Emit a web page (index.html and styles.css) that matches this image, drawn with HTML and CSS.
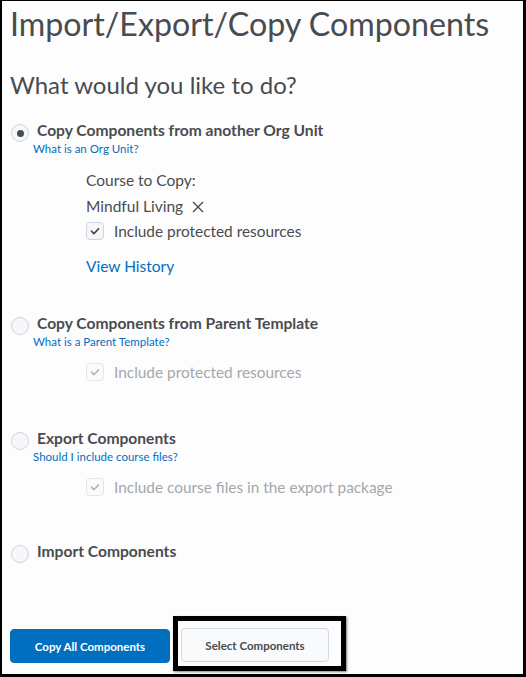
FILE: index.html
```html
<!DOCTYPE html>
<html lang="en">
<head>
<meta charset="utf-8">
<title>Import/Export/Copy Components</title>
<link rel="stylesheet" href="styles.css">
</head>
<body>
<div class="page">
  <header class="header">
    <h1 class="title">Import/Export/Copy Components</h1>
  </header>
  <main class="content">
    <h2 class="subtitle">What would you like to do?</h2>

    <section class="option option-first">
      <div class="radio-row">
        <span class="radio radio-checked"></span>
        <span class="radio-label">Copy Components from another Org Unit</span>
      </div>
      <a class="help-link" href="#">What is an Org Unit?</a>
      <div class="details">
        <div class="detail-line course-label">Course to Copy:</div>
        <div class="detail-line course-name">Mindful Living
          <svg class="remove-icon" width="12" height="12" viewBox="0 0 12 12"><path d="M1 1 L11 11 M11 1 L1 11" stroke="#494c4e" stroke-width="1.4" fill="none"/></svg>
        </div>
        <div class="check-row">
          <span class="checkbox"><svg width="18" height="18" viewBox="0 0 18 18"><path d="M5 9.2 L7.8 12 L13 6.6" stroke="#494c4e" stroke-width="1.8" fill="none" stroke-linecap="round" stroke-linejoin="round"/></svg></span>
          <span class="check-label">Include protected resources</span>
        </div>
        <a class="history-link" href="#">View History</a>
      </div>
    </section>

    <section class="option option-second">
      <div class="radio-row">
        <span class="radio"></span>
        <span class="radio-label">Copy Components from Parent Template</span>
      </div>
      <a class="help-link" href="#">What is a Parent Template?</a>
      <div class="details">
        <div class="check-row check-disabled">
          <span class="checkbox"><svg width="18" height="18" viewBox="0 0 18 18"><path d="M5 9.2 L7.8 12 L13 6.6" stroke="#b5b8ba" stroke-width="1.8" fill="none" stroke-linecap="round" stroke-linejoin="round"/></svg></span>
          <span class="check-label">Include protected resources</span>
        </div>
      </div>
    </section>

    <section class="option option-third">
      <div class="radio-row">
        <span class="radio"></span>
        <span class="radio-label">Export Components</span>
      </div>
      <a class="help-link" href="#">Should I include course files?</a>
      <div class="details">
        <div class="check-row check-disabled">
          <span class="checkbox"><svg width="18" height="18" viewBox="0 0 18 18"><path d="M5 9.2 L7.8 12 L13 6.6" stroke="#b5b8ba" stroke-width="1.8" fill="none" stroke-linecap="round" stroke-linejoin="round"/></svg></span>
          <span class="check-label">Include course files in the export package</span>
        </div>
      </div>
    </section>

    <section class="option option-fourth">
      <div class="radio-row">
        <span class="radio"></span>
        <span class="radio-label">Import Components</span>
      </div>
    </section>

    <div class="actions">
      <button class="btn btn-primary" type="button">Copy All Components</button>
      <span class="highlight-frame">
        <button class="btn btn-secondary" type="button">Select Components</button>
      </span>
    </div>
  </main>
</div>
</body>
</html>
```

FILE: styles.css
```css
html, body {
  margin: 0;
  padding: 0;
  background: #ffffff;
}

body {
  font-family: Lato, "Open Sans", sans-serif;
  color: #494c4e;
}

.page {
  box-sizing: border-box;
  width: 526px;
  height: 677px;
  overflow: hidden;
  border-style: solid;
  border-color: #000000;
  border-width: 1px 3px 3px 2px;
  background: #fdfdfe;
}

.header {
  padding: 3px 0 0 8px;
}

.title {
  margin: 0;
  font-size: 32.2px;
  line-height: 40px;
  font-weight: 400;
  color: #494c4e;
}

.content {
  padding: 0 0 0 8px;
}

.subtitle {
  margin: 26px 0 0 0;
  font-size: 24px;
  line-height: 30px;
  font-weight: 400;
  color: #494c4e;
}

.option {
  display: flex;
  flex-direction: column;
  align-items: flex-start;
}

.option-first { margin-top: 20px; }
.option-second { margin-top: 37px; }
.option-third { margin-top: 46px; }
.option-fourth { margin-top: 44px; }

.radio-row {
  display: flex;
  align-items: flex-start;
  height: 20px;
}

.radio {
  box-sizing: border-box;
  width: 18px;
  height: 18px;
  margin: 4px 0 0 1px;
  border-radius: 50%;
  border: 1px solid #cfd5dc;
  background: #f6f7f8;
  display: flex;
  align-items: center;
  justify-content: center;
}

.radio-checked::after {
  content: "";
  width: 7px;
  height: 7px;
  border-radius: 50%;
  background: #494c4e;
}

.radio-label {
  margin-left: 8px;
  font-size: 15.6px;
  line-height: 20px;
  font-weight: 700;
  color: #494c4e;
}

.help-link {
  margin: 1px 0 0 23px;
  font-size: 11.5px;
  line-height: 16px;
  color: #006fbf;
  text-decoration: none;
}

.details {
  display: flex;
  flex-direction: column;
  align-items: flex-start;
  padding-left: 76px;
  margin-top: 12px;
}

.option-first .details { margin-top: 13px; }

.detail-line {
  font-size: 15.5px;
  line-height: 20px;
}

.course-name {
  margin-top: 6px;
  display: flex;
  align-items: center;
}

.remove-icon {
  margin-left: 9px;
  margin-top: 1px;
}

.check-row {
  display: flex;
  align-items: center;
  height: 20px;
}

.course-name + .check-row { margin-top: 5px; }

.checkbox {
  box-sizing: border-box;
  width: 18px;
  height: 18px;
  border-radius: 4px;
  border: 1px solid #cfd5dc;
  background: #f6f7f8;
  display: flex;
  align-items: center;
  justify-content: center;
}

.checkbox svg {
  display: block;
}

.check-label {
  margin-left: 10px;
  font-size: 15.4px;
  line-height: 20px;
  color: #494c4e;
}

.check-disabled .checkbox {
  border-color: #e3e6e9;
  background: #fafbfb;
}

.check-disabled .check-label {
  color: #a5a8aa;
}

.history-link {
  margin-top: 15px;
  font-size: 15.5px;
  line-height: 20px;
  color: #006fbf;
  text-decoration: none;
}

.actions {
  display: flex;
  align-items: flex-start;
  margin-top: 55px;
}

.btn {
  box-sizing: border-box;
  height: 34px;
  border-radius: 4px;
  font-family: Lato, "Open Sans", sans-serif;
  font-size: 11.5px;
  font-weight: 700;
  padding: 0;
  cursor: pointer;
}

.btn-primary {
  width: 160px;
  margin-top: 13px;
  background: #006fbf;
  border: 1px solid #006fbf;
  color: #ffffff;
}

.btn-secondary {
  width: 148px;
  background: #f9fafb;
  border: 1px solid #d3d9e3;
  color: #494c4e;
}

.highlight-frame {
  display: block;
  margin-left: 3px;
  border: 5px solid #000000;
  padding: 7px 12px 4px 3px;
  box-shadow: 1px 1px 2px rgba(0, 0, 0, 0.5);
}
```
